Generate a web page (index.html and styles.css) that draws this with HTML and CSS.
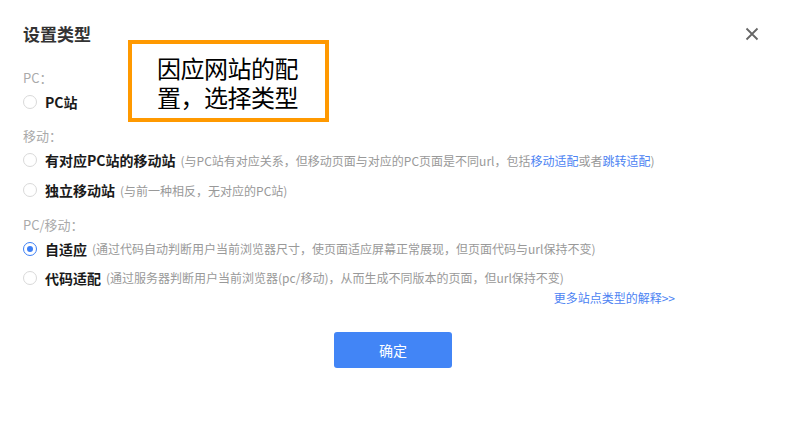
FILE: index.html
```html
<!DOCTYPE html>
<html lang="zh-CN">
<head>
<meta charset="utf-8">
<link rel="stylesheet" href="styles.css">
</head>
<body>
<div class="dialog">
  <div class="header">
    <h1 class="title">设置类型</h1>
    <button class="close" aria-label="关闭">
      <svg width="14" height="14" viewBox="0 0 14 14"><path d="M1.5 1.5 L12.5 12.5 M12.5 1.5 L1.5 12.5" stroke="#666" stroke-width="1.8" fill="none"/></svg>
    </button>
  </div>

  <div class="note">因应网站的配<br>置，选择类型</div>

  <div class="group g1">
    <div class="group-label">PC：</div>
    <label class="row"><span class="radio"></span><span class="name">PC站</span></label>
  </div>

  <div class="group g2">
    <div class="group-label">移动：</div>
    <label class="row"><span class="radio"></span><span class="name">有对应PC站的移动站</span><span class="desc">(与PC站有对应关系，但移动页面与对应的PC页面是不同url，包括<a class="link">移动适配</a>或者<a class="link">跳转适配</a>)</span></label>
    <label class="row"><span class="radio"></span><span class="name">独立移动站</span><span class="desc">(与前一种相反，无对应的PC站)</span></label>
  </div>

  <div class="group g3">
    <div class="group-label">PC/移动：</div>
    <label class="row tight"><span class="radio checked"></span><span class="name">自适应</span><span class="desc">(通过代码自动判断用户当前浏览器尺寸，使页面适应屏幕正常展现，但页面代码与url保持不变)</span></label>
    <label class="row tight"><span class="radio"></span><span class="name">代码适配</span><span class="desc">(通过服务器判断用户当前浏览器(pc/移动)，从而生成不同版本的页面，但url保持不变)</span></label>
  </div>

  <div class="more"><a class="link">更多站点类型的解释&gt;&gt;</a></div>

  <div class="footer"><button class="ok">确定</button></div>
</div>
</body>
</html>
```

FILE: styles.css
```css
* { box-sizing: border-box; }
html, body { margin: 0; padding: 0; background: #fff; }
body {
  font-family: "Noto Sans CJK SC", "Noto Sans", sans-serif;
  color: #333;
  width: 786px;
  height: 423px;
  overflow: hidden;
}
.dialog {
  position: relative;
  padding: 22px 23px 0 23px;
}
.header {
  display: flex;
  justify-content: space-between;
  align-items: center;
  height: 24px;
}
.title {
  margin: 0;
  font-size: 17px;
  font-weight: bold;
  line-height: 24px;
  color: #333;
}
.close {
  border: 0;
  background: none;
  padding: 0;
  width: 14px;
  height: 14px;
  margin-right: 4px;
  display: flex;
}
.note {
  position: absolute;
  left: 128px;
  top: 40px;
  width: 201px;
  height: 82px;
  border: 4px solid #ff9900;
  background: #fff;
  font-size: 24px;
  line-height: 29px;
  color: #000;
  padding: 9px 0 0 25px;
  letter-spacing: -0.5px;
}
.group-label {
  width: fit-content;
  font-size: 13px;
  line-height: 18px;
  height: 18px;
  color: #aaa;
}
.g1 { margin-top: 23px; }
.g2 { margin-top: 10px; }
.g3 { margin-top: 11px; }
.row {
  display: flex;
  width: fit-content;
  align-items: center;
  height: 30px;
  white-space: nowrap;
}
.row.tight { height: 29px; }
.radio {
  flex: none;
  width: 14px;
  height: 14px;
  border: 1px solid #d9d9d9;
  border-radius: 50%;
  margin-right: 8px;
  position: relative;
}
.radio.checked {
  border-color: #3d7ff5;
}
.radio.checked::after {
  content: "";
  position: absolute;
  left: 3px;
  top: 3px;
  width: 6px;
  height: 6px;
  border-radius: 50%;
  background: #3d7ff5;
}
.name {
  font-size: 14px;
  font-weight: bold;
  color: #1a1a1a;
}
.desc {
  font-size: 12px;
  color: #999;
  margin-left: 5px;
}
.link {
  color: #4c83f3;
  text-decoration: none;
  cursor: pointer;
}
.more {
  display: flex;
  justify-content: flex-end;
  padding-right: 88px;
  font-size: 12px;
  line-height: 14px;
  margin-top: -1px;
}
.footer {
  display: flex;
  justify-content: center;
  margin-top: 27px;
}
.ok {
  width: 118px;
  height: 36px;
  border: 0;
  border-radius: 3px;
  background: #4285f6;
  color: #fff;
  font-family: inherit;
  font-size: 14px;
}
```
